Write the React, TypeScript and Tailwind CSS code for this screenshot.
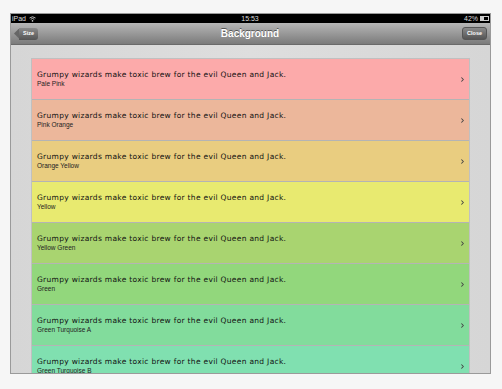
import { ChevronRight } from "lucide-react";

const rows = [
  { name: "Pale Pink", bg: "bg-[#fcaaaa]" },
  { name: "Pink Orange", bg: "bg-[#ecb79b]" },
  { name: "Orange Yellow", bg: "bg-[#e9cd80]" },
  { name: "Yellow", bg: "bg-[#e8ea70]" },
  { name: "Yellow Green", bg: "bg-[#a9d470]" },
  { name: "Green", bg: "bg-[#92d77c]" },
  { name: "Green Turquoise A", bg: "bg-[#82dc9c]" },
  { name: "Green Turquoise B", bg: "bg-[#80e0b0]" },
];

function Row({ name, bg }: { name: string; bg: string }) {
  return (
    <div className={`${bg} h-[41px] shrink-0 flex items-center border-b border-[#b4b4b4] pl-[5px] pr-[3px]`}>
      <div className="flex-1 flex flex-col leading-none">
        <span className="text-[7.5px] tracking-[0.3px] text-[#111] font-['DejaVu_Sans',sans-serif]">
          Grumpy wizards make toxic brew for the evil Queen and Jack.
        </span>
        <span className="text-[6.5px] text-[#222] mt-[2px] font-['Liberation_Sans',sans-serif]">{name}</span>
      </div>
      <ChevronRight className="w-[7px] h-[7px] text-[#444]" strokeWidth={3.5} />
    </div>
  );
}

export default function App() {
  return (
    <div className="w-[502px] h-[389px] bg-[#f6f6f6] pt-[13px] pl-[10px] font-['Liberation_Sans',sans-serif]">
      <div className="w-[481px] h-[361px] border border-[#9a9a9a] flex flex-col overflow-hidden">
        {/* status bar */}
        <div className="h-[9px] bg-black flex items-center justify-between px-[1px] text-[#ddd] text-[7px] leading-none">
          <div className="flex items-center gap-[3px]">
            <span>iPad</span>
            <svg width="7" height="6" viewBox="0 0 7 6">
              <path d="M0.5 2 Q3.5 -0.5 6.5 2" stroke="#ccc" strokeWidth="0.9" fill="none" />
              <path d="M1.7 3.3 Q3.5 1.6 5.3 3.3" stroke="#ccc" strokeWidth="0.9" fill="none" />
              <circle cx="3.5" cy="4.9" r="0.8" fill="#ccc" />
            </svg>
          </div>
          <span>15:53</span>
          <div className="flex items-center gap-[2px]">
            <span>42%</span>
            <div className="w-[9px] h-[5px] border border-[#ccc] flex">
              <div className="w-[3px] bg-[#ccc]" />
            </div>
          </div>
        </div>
        {/* nav bar */}
        <div className="h-[22px] bg-gradient-to-b from-[#b7b7b7] to-[#7b7b7b] border-b border-[#6a6a6a] flex items-center justify-between px-[3px]">
          <div className="flex items-center">
            <div className="w-[5px] h-[10px] bg-[#666] [clip-path:polygon(100%_0,100%_100%,0_50%)]" />
            <div className="h-[12px] px-[4px] bg-gradient-to-b from-[#8a8a8a] to-[#555] rounded-r-[3px] text-white text-[5.5px] font-bold flex items-center">
              Size
            </div>
          </div>
          <span className="text-white font-bold text-[10px] [text-shadow:0_-1px_0_#555]">Background</span>
          <div className="h-[13px] px-[4px] bg-gradient-to-b from-[#8a8a8a] to-[#555] rounded-[3px] border border-[#555] text-white text-[5.5px] font-bold flex items-center">
            Close
          </div>
        </div>
        {/* content */}
        <div className="flex-1 bg-gradient-to-r from-[#d6d6d6] via-[#dedede] to-[#d6d6d6] pt-[13px] pl-[20px] pr-[20px] overflow-hidden">
          <div className="flex flex-col border-t border-l border-r border-[#c0c0c0]">
            {rows.map((r) => (
              <Row key={r.name} name={r.name} bg={r.bg} />
            ))}
          </div>
        </div>
      </div>
    </div>
  );
}
